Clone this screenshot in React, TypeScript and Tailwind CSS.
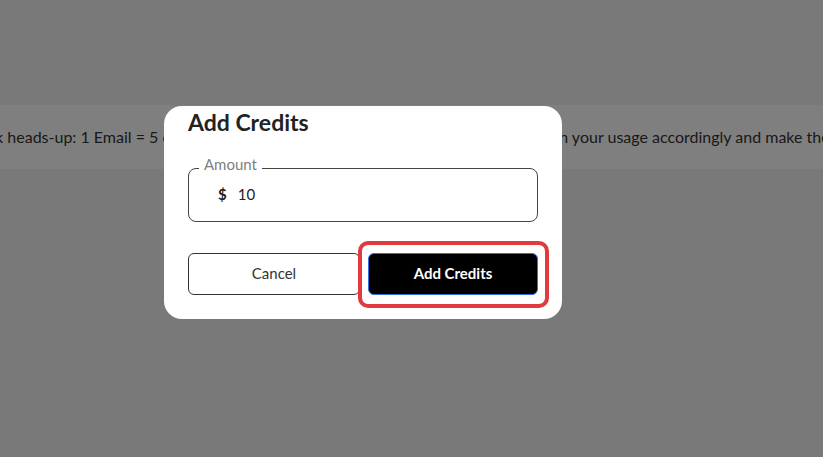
import { useState } from "react";

const FONT = { fontFamily: "Lato, 'Noto Sans', sans-serif" };

export default function App() {
  const [amount, setAmount] = useState("10");

  return (
    <div className="relative h-[457px] w-[823px] overflow-hidden bg-[#f2f2f2]" style={FONT}>
      {/* page behind the dialog */}
      <div className="pt-[105px]">
        <div className="flex h-[64px] items-center overflow-hidden whitespace-nowrap bg-white">
          <p className="-ml-[38px] text-[16px] text-[#333]">
            Quick heads-up: 1 Email = 5 credits and 1 SMS = 10 credits on every send you do. Plan your usage accordingly and make the most of every campaign.
          </p>
        </div>
      </div>

      {/* overlay */}
      <div className="absolute inset-0 bg-black/50" />

      {/* dialog */}
      <div className="absolute left-[164px] top-[106px] w-[398px] rounded-[18px] bg-white px-6 pb-6 pt-0">
        <h2 className="text-[23px] font-bold leading-[32px] text-[#222]">Add Credits</h2>

        <fieldset className="mt-[18px] rounded-[8px] border border-[#444] px-[10px] pb-[15px] pt-[3px]">
          <legend className="px-[5px] pb-[8px] text-[15px] leading-[16px] text-[#808080]">Amount</legend>
          <div className="flex items-center gap-[11px] pl-[19px] text-[15px] text-[#222]">
            <span className="font-bold">$</span>
            <input
              value={amount}
              onChange={(e) => setAmount(e.target.value)}
              className="w-full bg-transparent outline-none"
            />
          </div>
        </fieldset>

        <div className="mt-[31px] flex gap-2">
          <button className="h-[42px] flex-1 rounded-[6px] border border-[#333] bg-white text-[15px] text-[#333]">
            Cancel
          </button>
          <div className="relative flex-1">
            <button className="h-[42px] w-full rounded-[6px] border border-[#2f6fe0] bg-black text-[15px] font-bold text-white">
              Add Credits
            </button>
            <div className="pointer-events-none absolute -bottom-[13px] -left-[10px] -right-[11px] -top-[12px] rounded-[10px] border-[4px] border-[#e03a3e]" />
          </div>
        </div>
      </div>
    </div>
  );
}
